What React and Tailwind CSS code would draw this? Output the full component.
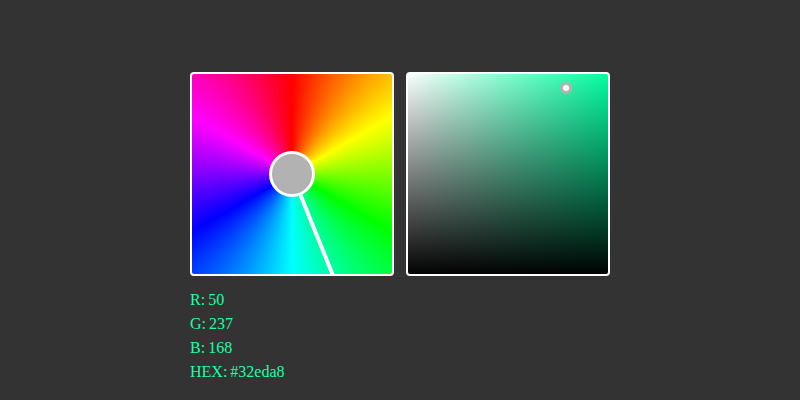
const channels = [
  ["R", "50"],
  ["G", "237"],
  ["B", "168"],
  ["HEX", "#32eda8"],
];

function HueWheel() {
  return (
    <div
      role="img"
      aria-label="Hue"
      className="relative size-[204px] overflow-hidden rounded border-2 border-white bg-[conic-gradient(#f00,#ff0,#0f0,#0ff,#00f,#f0f,#f00)]"
    >
      <svg viewBox="0 0 200 200" className="absolute inset-0 size-full">
        <line x1="100" y1="100" x2="142" y2="204" stroke="#fff" strokeWidth="4" />
        <circle cx="100" cy="100" r="21.5" fill="#b2b2b2" stroke="#fff" strokeWidth="3" />
      </svg>
    </div>
  );
}

function ShadeBox() {
  return (
    <div
      role="img"
      aria-label="Saturation and brightness"
      className="relative size-[204px] overflow-hidden rounded border-2 border-white bg-[linear-gradient(to_top,#000,transparent),linear-gradient(to_right,#fff,#00ffa1)] bg-origin-border"
    >
      <span className="absolute top-[8px] left-[152px] size-[12px] rounded-full border-[3px] border-[#b2b2b2] bg-white" />
    </div>
  );
}

export default function App() {
  return (
    <main className="min-h-screen bg-[#333333] pt-[72px]">
      <div className="mx-auto w-[420px]">
        <div className="flex gap-3">
          <HueWheel />
          <ShadeBox />
        </div>
        <dl className="mt-3 font-['Liberation_Serif',serif] text-base leading-6 text-[#1cffa4]">
          {channels.map(([name, value]) => (
            <div key={name} className="flex gap-[3px]">
              <dt>{name}:</dt>
              <dd>{value}</dd>
            </div>
          ))}
        </dl>
      </div>
    </main>
  );
}
